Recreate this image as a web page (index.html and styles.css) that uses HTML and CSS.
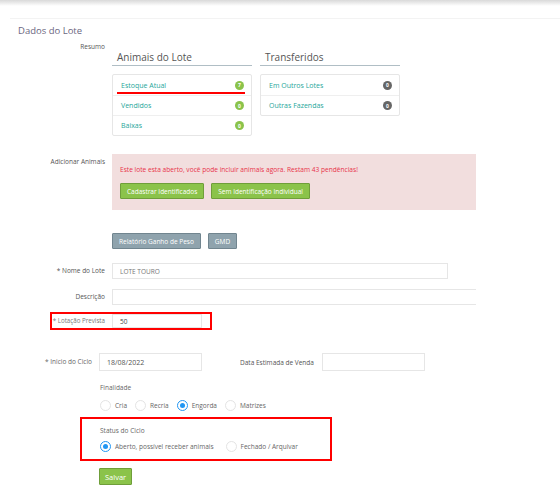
FILE: index.html
```html
<!DOCTYPE html>
<html lang="pt-BR">
<head>
    <meta charset="UTF-8">
    <title>Dados do Lote</title>
    <link rel="stylesheet" href="styles.css">
</head>
<body>
    <div class="topbar"></div>

    <div class="panel">
        <h2 class="panel-title">Dados do Lote</h2>

        <div class="row row-top row-resumo">
            <div class="label">Resumo</div>
            <div class="summary">
                <div class="summary-col">
                    <h3>Animais do Lote</h3>
                    <ul class="list">
                        <li class="marked">Estoque Atual <span class="badge">7</span></li>
                        <li>Vendidos <span class="badge">0</span></li>
                        <li>Baixas <span class="badge">0</span></li>
                    </ul>
                </div>
                <div class="summary-col">
                    <h3>Transferidos</h3>
                    <ul class="list">
                        <li>Em Outros Lotes <span class="badge dark">0</span></li>
                        <li>Outras Fazendas <span class="badge dark">0</span></li>
                    </ul>
                </div>
            </div>
        </div>

        <div class="row row-top row-alert">
            <div class="label">Adicionar Animais</div>
            <div class="alert">
                <p>Este lote esta aberto, você pode incluir animais agora. Restam 43 pendências!</p>
                <div class="btns">
                    <button class="btn btn-green">Cadastrar Identificados</button>
                    <button class="btn btn-green">Sem Identificação Individual</button>
                </div>
            </div>
        </div>

        <div class="row row-reports">
            <div class="label"></div>
            <div class="btns">
                <button class="btn btn-gray">Relatório Ganho de Peso</button>
                <button class="btn btn-gray">GMD</button>
            </div>
        </div>

        <div class="row row-name">
            <div class="label">* Nome do Lote</div>
            <input class="input input-name" type="text" value="LOTE TOURO">
        </div>

        <div class="row row-desc">
            <div class="label">Descrição</div>
            <input class="input input-desc" type="text">
        </div>

        <div class="row row-lotacao highlight">
            <div class="label">* Lotação Prevista</div>
            <input class="input input-small" type="text" value="50">
        </div>

        <div class="row row-ciclo">
            <div class="label label-ciclo">* Inicio do Ciclo</div>
            <input class="input input-date" type="text" value="18/08/2022">
            <div class="label-inline">Data Estimada de Venda</div>
            <input class="input input-date" type="text">
        </div>

        <div class="group group-finalidade">
            <div class="group-title">Finalidade</div>
            <div class="radios">
                <label class="radio"><span class="dot"></span>Cria</label>
                <label class="radio"><span class="dot"></span>Recria</label>
                <label class="radio"><span class="dot checked"></span>Engorda</label>
                <label class="radio"><span class="dot"></span>Matrizes</label>
            </div>
        </div>

        <div class="group group-status highlight">
            <div class="group-title">Status do Ciclo</div>
            <div class="radios">
                <label class="radio"><span class="dot checked"></span>Aberto, possível receber animais</label>
                <label class="radio"><span class="dot"></span>Fechado / Arquivar</label>
            </div>
        </div>

        <button class="btn btn-green btn-save">Salvar</button>
    </div>
</body>
</html>
```

FILE: styles.css
```css
:root {
    --green: #8bc34a;
    --green-border: #6f9e3a;
    --teal: #26a69a;
    --text-color: #444;
    --border: #e6e6e6;
}

* {
    margin: 0;
    padding: 0;
    box-sizing: border-box;
    font-family: "Open Sans", "Noto Sans", sans-serif;
}

body {
    background: #fff;
    color: var(--text-color);
    width: 560px;
    height: 498px;
    overflow: hidden;
}

.topbar {
    height: 6px;
    background: linear-gradient(#d9d9d9, #fff);
}

.panel {
    margin: 12px 0 0 10px;
    border-top: 1px solid #f3f3f3;
}

.panel-title {
    font-size: 9.5px;
    font-weight: 400;
    color: #6b6680;
    margin: 5px 0 0 8px;
    line-height: 14px;
}

.row {
    display: flex;
    align-items: center;
}

.row-top {
    align-items: flex-start;
}

.label {
    width: 102px;
    flex-shrink: 0;
    padding-right: 7px;
    text-align: right;
    font-size: 6.5px;
    color: #555;
    line-height: 10px;
    white-space: nowrap;
}

/* resumo */
.row-resumo {
    margin-top: 4px;
}

.summary {
    display: flex;
    gap: 8px;
    margin-top: 8px;
}

.summary-col {
    width: 140px;
}

.summary-col h3 {
    font-size: 10px;
    font-weight: 400;
    color: #555;
    line-height: 14px;
    padding-left: 5px;
    border-bottom: 1px solid #b0bec5;
    padding-bottom: 1px;
    margin-bottom: 8px;
}

.list {
    list-style: none;
    border: 1px solid var(--border);
    border-radius: 2px;
}

.list li {
    display: flex;
    justify-content: space-between;
    align-items: center;
    height: 20px;
    padding: 0 7px 0 8px;
    font-size: 7px;
    color: var(--teal);
    border-top: 1px solid #efefef;
}

.list li:first-child {
    border-top: none;
}

.list li.marked {
    position: relative;
}

.list li.marked::after {
    content: "";
    position: absolute;
    left: 4px;
    right: 6px;
    bottom: 1px;
    height: 2px;
    background: #f00;
}

.badge {
    width: 9px;
    height: 9px;
    border-radius: 50%;
    background: var(--green);
    color: #fff;
    font-size: 5px;
    font-weight: 700;
    display: flex;
    align-items: center;
    justify-content: center;
}

.badge.dark {
    background: #666;
}

/* alert */
.row-alert {
    margin-top: 18px;
}

.row-alert .label {
    margin-top: 3px;
}

.alert {
    width: 364px;
    background: #f2dede;
    padding: 11px 8px 11px 8px;
}

.alert p {
    font-size: 6.6px;
    color: #e8334a;
    line-height: 10px;
}

.btns {
    display: flex;
    gap: 7px;
}

.alert .btns {
    margin-top: 8px;
}

.btn {
    font-size: 6.5px;
    color: #fff;
    height: 16px;
    padding: 0 6px;
    border-radius: 1px;
    cursor: pointer;
}

.btn-green {
    background: var(--green);
    border: 1px solid var(--green-border);
}

.btn-gray {
    background: #8fa3ad;
    border: 1px solid #71858f;
}

.row-reports {
    margin-top: 23px;
}

/* inputs */
.input {
    height: 16px;
    border: 1px solid var(--border);
    font-size: 6.5px;
    color: #777;
    padding: 0 7px;
    outline: none;
}

.row-name {
    margin-top: 14px;
}

.input-name {
    width: 336px;
}

.row-desc {
    margin-top: 10px;
}

.input-desc {
    width: 364px;
    border-right: none;
}

.highlight {
    border: 2px solid #f00;
}

.row-lotacao {
    margin: 7px 0 0 40px;
    width: 162px;
    height: 18px;
}

.row-lotacao .label {
    width: 60px;
    color: #777;
    font-size: 6.2px;
}

.row-lotacao .input {
    width: 90px;
    height: 14px;
    color: #444;
}

.row-ciclo {
    margin-top: 23px;
}

.label-ciclo {
    width: 89px;
    color: #666;
}

.input-date {
    width: 103px;
    height: 18px;
    font-size: 7px;
    color: #555;
}

.label-inline {
    font-size: 6.5px;
    color: #555;
    margin: 0 8px 0 38px;
}

/* radio groups */
.group {
    margin-left: 90px;
}

.group-finalidade {
    margin-top: 12px;
}

.group-title {
    font-size: 6.5px;
    color: #666;
    line-height: 10px;
}

.radios {
    display: flex;
    gap: 8px;
    margin-top: 7px;
}

.radio {
    display: flex;
    align-items: center;
    gap: 4px;
    font-size: 6.5px;
    color: #666;
}

.dot {
    width: 11px;
    height: 11px;
    border: 1px solid #e4e4e4;
    border-radius: 50%;
    position: relative;
}

.dot.checked {
    border-color: #2196f3;
}

.dot.checked::after {
    content: "";
    position: absolute;
    left: 2px;
    top: 2px;
    width: 5px;
    height: 5px;
    border-radius: 50%;
    background: #2196f3;
}

.group-status {
    margin: 6px 0 0 70px;
    width: 252px;
    height: 44px;
    padding: 7px 0 0 18px;
}

.group-status .radios {
    margin-top: 5px;
    gap: 12px;
}

.btn-save {
    margin: 7px 0 0 89px;
    height: 17px;
    font-size: 7.5px;
    padding: 0 5px;
}
```
